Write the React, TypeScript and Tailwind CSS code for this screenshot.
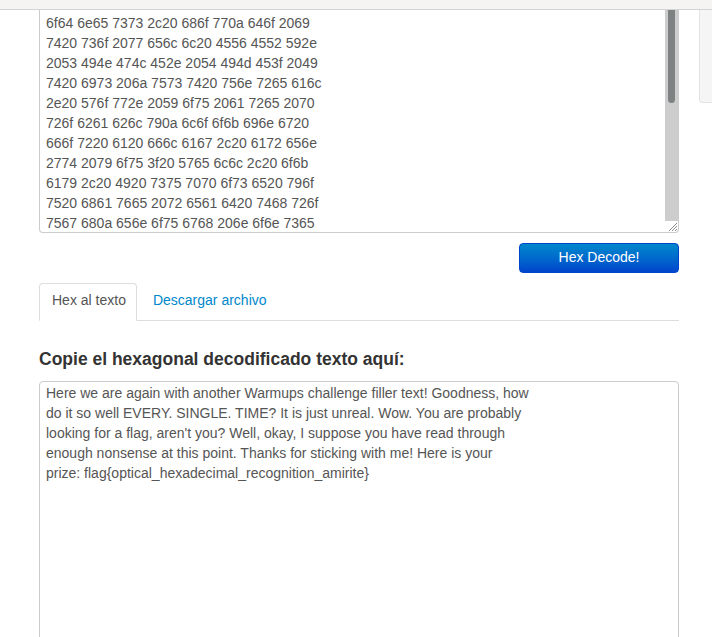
const hexLines = [
  "6f64 6e65 7373 2c20 686f 770a 646f 2069",
  "7420 736f 2077 656c 6c20 4556 4552 592e",
  "2053 494e 474c 452e 2054 494d 453f 2049",
  "7420 6973 206a 7573 7420 756e 7265 616c",
  "2e20 576f 772e 2059 6f75 2061 7265 2070",
  "726f 6261 626c 790a 6c6f 6f6b 696e 6720",
  "666f 7220 6120 666c 6167 2c20 6172 656e",
  "2774 2079 6f75 3f20 5765 6c6c 2c20 6f6b",
  "6179 2c20 4920 7375 7070 6f73 6520 796f",
  "7520 6861 7665 2072 6561 6420 7468 726f",
  "7567 680a 656e 6f75 6768 206e 6f6e 7365",
];

const decodedLines = [
  "Here we are again with another Warmups challenge filler text! Goodness, how",
  "do it so well EVERY. SINGLE. TIME? It is just unreal. Wow. You are probably",
  "looking for a flag, aren't you? Well, okay, I suppose you have read through",
  "enough nonsense at this point. Thanks for sticking with me! Here is your",
  "prize: flag{optical_hexadecimal_recognition_amirite}",
];

function ResizeGrip() {
  return (
    <svg width="11" height="11" viewBox="0 0 11 11" className="absolute bottom-0 right-0">
      <path d="M10 2 L2 10 M10 5 L5 10 M10 8 L8 10" stroke="#8a8a8a" strokeWidth="1" />
    </svg>
  );
}

export default function App() {
  return (
    <div className="h-[637px] w-[712px] overflow-hidden bg-white font-['Liberation_Sans',Arial,sans-serif] text-[14px] leading-[20px] text-[#555]">
      <div className="h-[10px] border-b border-[#d3d3d3] bg-[#f5f4f2]" />

      <div className="flex">
        <div className="ml-[39px] w-[640px] shrink-0">
          {/* encoded input, scrolled */}
          <div className="relative h-[223px] overflow-hidden rounded-b-[4px] border-x border-b border-[#cccccc] bg-white pl-[6px] pt-[3px]">
            {hexLines.map((line) => (
              <div key={line} className="whitespace-pre">
                {line}
              </div>
            ))}
            <div className="absolute right-0 top-0 h-[211px] w-[13px] bg-[#cdcdcd]">
              <div className="ml-[3px] h-[93px] w-[7px] rounded-b-full bg-[#7f8283]" />
            </div>
            <ResizeGrip />
          </div>

          <div className="mt-[10px] flex justify-end">
            <button className="h-[30px] w-[160px] rounded-[4px] border border-[#0044cc] bg-gradient-to-b from-[#0088cc] to-[#0044cc] pb-[3px] text-[14px] leading-[20px] text-white">
              Hex Decode!
            </button>
          </div>

          <ul className="mt-[10px] flex border-b border-[#dddddd]">
            <li className="-mb-px mr-[2px]">
              <span className="block rounded-t-[4px] border border-[#dddddd] border-b-transparent bg-white pb-[10px] pl-[12px] pr-[10px] pt-[6px] text-[#555]">
                Hex al texto
              </span>
            </li>
            <li className="-mb-px mr-[2px]">
              <span className="block border border-transparent pb-[10px] pl-[13px] pr-[12px] pt-[6px] text-[#0088cc]">
                Descargar archivo
              </span>
            </li>
          </ul>

          <h4 className="mt-[28px] text-[17.5px] font-bold leading-[20px] text-[#333]">
            Copie el hexagonal decodificado texto aquí:
          </h4>

          <div className="mt-[12px] h-[300px] rounded-[4px] border border-[#cccccc] px-[6px] pt-[1px]">
            {decodedLines.map((line) => (
              <div key={line} className="whitespace-pre">
                {line}
              </div>
            ))}
          </div>
        </div>

        {/* side panel, mostly off screen */}
        <div className="ml-[20px] h-[93px] w-[200px] shrink-0 rounded-bl-[4px] border-b border-l border-[#e3e3e3] bg-[#f5f5f5]" />
      </div>
    </div>
  );
}
